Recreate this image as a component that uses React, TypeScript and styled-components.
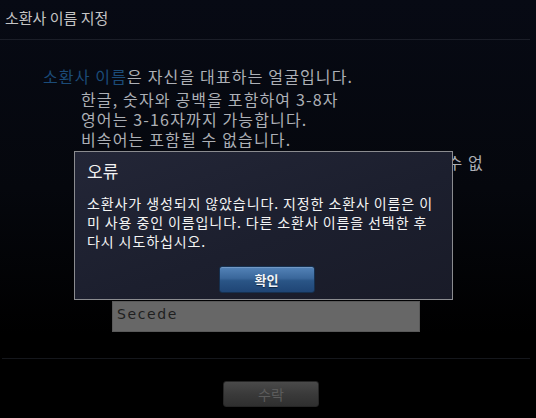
import React from "react";
import styled, { createGlobalStyle } from "styled-components";

const Global = createGlobalStyle`
  html, body { margin: 0; padding: 0; background: #000; }
  body { font-family: "Noto Sans CJK KR", "Noto Sans", sans-serif; }
`;

const Page = styled.div`
  position: relative;
  width: 536px;
  height: 418px;
  overflow: hidden;
  background: linear-gradient(180deg, #070a14 0%, #05070d 45%, #000 80%);
  display: flex;
  flex-direction: column;
`;

const Header = styled.div`
  height: 39px;
  margin-right: 6px;
  padding-left: 5px;
  border-bottom: 1px solid #1b1e28;
  display: flex;
  align-items: flex-start;
`;

const Title = styled.div`
  margin-top: 7px;
  font-size: 15px;
  line-height: 22px;
  color: #c4c4c4;
`;

const Body = styled.div`
  padding-top: 25px;
  height: 319px;
  box-sizing: border-box;
  display: flex;
  flex-direction: column;
  border-bottom: 1px solid #15171c;
  margin-right: 6px;
  margin-left: 2px;
`;

const Lead = styled.div`
  padding-left: 41px;
  font-size: 16px;
  line-height: 22px;
  letter-spacing: 1.15px;
  color: #adb0b6;
  white-space: nowrap;
`;

const Accent = styled.span`
  color: #1b4b78;
`;

const Rule = styled.div<{ $gap?: number }>`
  padding-left: 79px;
  margin-top: ${(p) => p.$gap ?? 0}px;
  font-size: 16px;
  line-height: 20px;
  letter-spacing: 1.15px;
  color: #adb0b6;
  white-space: nowrap;
`;

const NameBox = styled.div`
  margin: auto 0 26px 110px;
  width: 308px;
  height: 31px;
  box-sizing: border-box;
  background: #676767;
  border: 1px solid #595959;
  padding: 2px 0 0 4px;
  font-family: "DejaVu Sans", sans-serif;
  font-size: 14px;
  line-height: 20px;
  letter-spacing: 1.6px;
  color: #1f1f1f;
`;

const Footer = styled.div`
  flex: 1;
  display: flex;
  justify-content: center;
  align-items: flex-start;
  padding-top: 22px;
  padding-left: 6px;
`;

const GrayButton = styled.div`
  width: 96px;
  height: 26px;
  box-sizing: border-box;
  border-radius: 3px;
  border: 1px solid #262626;
  background: linear-gradient(180deg, #4a4a4a 0%, #3a3a3a 50%, #2f2f2f 100%);
  color: #5c5c5c;
  font-size: 14px;
  line-height: 24px;
  text-align: center;
`;

const Dialog = styled.div`
  position: absolute;
  left: 74px;
  top: 151px;
  width: 379px;
  height: 149px;
  box-sizing: border-box;
  border: 1px solid #8b8c90;
  background: linear-gradient(160deg, #232637 0%, #1c1f2e 55%, #191b28 100%);
  padding: 7px 12px 0 12px;
  display: flex;
  flex-direction: column;
`;

const DialogTitle = styled.div`
  font-size: 17px;
  line-height: 24px;
  color: #f2f2f2;
`;

const DialogText = styled.div`
  margin-top: 11px;
  font-size: 14px;
  line-height: 19px;
  letter-spacing: 0.9px;
  color: #f4f4f4;
  word-break: break-all;
  overflow-wrap: anywhere;
`;

const DialogActions = styled.div`
  margin-top: auto;
  margin-bottom: 6px;
  display: flex;
  justify-content: center;
  padding-left: 6px;
`;

const BlueButton = styled.div`
  width: 96px;
  height: 27px;
  box-sizing: border-box;
  border-radius: 3px;
  border: 1px solid #16304f;
  background: linear-gradient(180deg, #5483b8 0%, #3a679b 45%, #2a5586 55%, #1f4575 100%);
  box-shadow: inset 0 1px 0 rgba(255, 255, 255, 0.18);
  color: #f4f6fa;
  font-size: 13px;
  font-weight: 700;
  line-height: 25px;
  text-align: center;
  text-shadow: 0 1px 1px rgba(0, 0, 0, 0.5);
`;

export default function App() {
  return (
    <>
      <Global />
      <Page>
        <Header>
          <Title>소환사 이름 지정</Title>
        </Header>
        <Body>
          <Lead>
            <Accent>소환사 이름</Accent>은 자신을 대표하는 얼굴입니다.
          </Lead>
          <Rule $gap={2}>한글, 숫자와 공백을 포함하여 3-8자</Rule>
          <Rule>영어는 3-16자까지 가능합니다.</Rule>
          <Rule>비속어는 포함될 수 없습니다.</Rule>
          <Rule $gap={3}>또한 타인에게 불쾌감을 주는 단어나 표현은 사용할 수 없</Rule>
          <NameBox>Secede</NameBox>
        </Body>
        <Footer>
          <GrayButton>수락</GrayButton>
        </Footer>
        <Dialog>
          <DialogTitle>오류</DialogTitle>
          <DialogText>
            소환사가 생성되지 않았습니다. 지정한 소환사 이름은 이미 사용 중인 이름입니다. 다른 소환사 이름을 선택한 후 다시 시도하십시오.
          </DialogText>
          <DialogActions>
            <BlueButton>확인</BlueButton>
          </DialogActions>
        </Dialog>
      </Page>
    </>
  );
}
